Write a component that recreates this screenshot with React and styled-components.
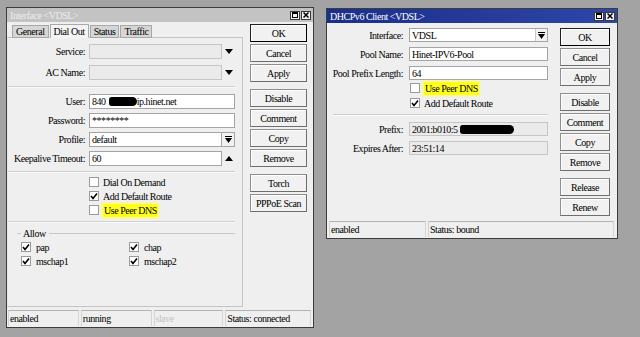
import React from "react";
import styled, { createGlobalStyle } from "styled-components";

const GlobalStyle = createGlobalStyle`
  html, body {
    margin: 0;
    padding: 0;
  }
  body {
    width: 640px;
    height: 337px;
    overflow: hidden;
    background: #a3a3a3;
    font-family: "Liberation Serif", "Times New Roman", serif;
    font-size: 10px;
    letter-spacing: -0.45px;
    color: #000;
  }
`;

const Desktop = styled.div`
  position: relative;
  width: 640px;
  height: 337px;
  background: #a3a3a3;
`;

const Window = styled.div`
  position: absolute;
  left: ${(p) => p.x}px;
  top: ${(p) => p.y}px;
  width: ${(p) => p.w}px;
  height: ${(p) => p.h}px;
  box-sizing: border-box;
  border: 1px solid #3c3c3c;
  background: #efefef;
  display: flex;
  flex-direction: column;
`;

const TitleBar = styled.div`
  height: 14px;
  flex: none;
  display: flex;
  align-items: center;
  padding: 0 2px 0 3px;
  background: ${(p) =>
    p.active ? "linear-gradient(90deg, #1b2f8a, #2d46a8)" : "#c3c3c3"};
  color: ${(p) => (p.active ? "#ffffff" : "#ececec")};
`;

const TitleText = styled.div`
  flex: 1;
  white-space: nowrap;
`;

const TitleButton = styled.div`
  width: 10px;
  height: 9px;
  margin-left: 1px;
  box-sizing: border-box;
  border: 1px solid #3a3a3a;
  background: #f4f4f4;
  display: flex;
  align-items: center;
  justify-content: center;
`;

const Body = styled.div`
  flex: 1;
  display: flex;
  min-height: 0;
  padding: ${(p) => p.pad};
`;

const LeftColumn = styled.div`
  width: ${(p) => p.w}px;
  display: flex;
  flex-direction: column;
`;

const Tabs = styled.div`
  height: 14px;
  display: flex;
  align-items: flex-end;
  padding-left: 5px;
  position: relative;
  z-index: 1;
`;

const Tab = styled.div`
  height: ${(p) => (p.selected ? 14 : 13)}px;
  box-sizing: border-box;
  padding: 0 3px;
  margin-right: 1px;
  display: flex;
  align-items: center;
  border: 1px solid #a8a8a8;
  border-bottom: ${(p) => (p.selected ? "1px solid #f4f4f4" : "1px solid #a8a8a8")};
  background: ${(p) => (p.selected ? "#f4f4f4" : "#d6d6d6")};
  white-space: nowrap;
`;

const Panel = styled.div`
  flex: 1;
  margin-top: -1px;
  box-sizing: border-box;
  border: 1px solid #c4c4c4;
  border-left-color: #e8e8e8;
  display: flex;
  flex-direction: column;
  padding: 6px 7px 0 0;
`;

const Row = styled.div`
  display: flex;
  align-items: center;
  height: ${(p) => p.h || 15}px;
  margin-top: ${(p) => p.mt || 0}px;
`;

const Label = styled.div`
  width: ${(p) => p.w}px;
  margin-right: ${(p) => p.gap}px;
  text-align: right;
  white-space: nowrap;
  flex: none;
`;

const Field = styled.div`
  flex: 1;
  height: 100%;
  box-sizing: border-box;
  border: 1px solid #a4a4a4;
  background: ${(p) => (p.disabled ? "#ebebeb" : "#ffffff")};
  border-color: ${(p) => (p.disabled ? "#c6c6c6" : "#a4a4a4")};
  display: flex;
  align-items: center;
  padding-left: 2px;
  white-space: nowrap;
  overflow: hidden;
`;

const Tail = styled.div`
  width: 13px;
  flex: none;
  height: 100%;
  display: flex;
  align-items: center;
  justify-content: center;
`;

const ComboButton = styled.div`
  width: 13px;
  flex: none;
  height: 100%;
  box-sizing: border-box;
  border: 1px solid #a4a4a4;
  border-left: none;
  background: #f2f2f2;
  display: flex;
  align-items: center;
  justify-content: center;
`;

const InnerCombo = styled.div`
  width: 12px;
  height: 100%;
  margin-left: auto;
  box-sizing: border-box;
  border-left: 1px solid #c8c8c8;
  background: #f2f2f2;
  display: flex;
  align-items: center;
  justify-content: center;
`;

const Redact = styled.span`
  display: inline-block;
  width: ${(p) => p.w}px;
  margin-left: ${(p) => p.ml || 0}px;
  height: 9px;
  background: #000;
  border-radius: 3px 5px 5px 3px;
`;

const Separator = styled.div`
  height: 1px;
  background: #cfcfcf;
  border-bottom: 1px solid #fafafa;
  margin: ${(p) => p.m};
`;

const CheckRow = styled.div`
  display: flex;
  align-items: center;
  height: 14px;
  margin-left: ${(p) => p.ml || 0}px;
  margin-top: ${(p) => p.mt || 0}px;
  white-space: nowrap;
`;

const Box = styled.div`
  width: 10px;
  height: 10px;
  box-sizing: border-box;
  border: 1px solid #9a9a9a;
  background: #ffffff;
  margin-right: ${(p) => p.gap || 4}px;
  display: flex;
  align-items: center;
  justify-content: center;
  flex: none;
`;

const Highlight = styled.span`
  background: #ffff1a;
  box-shadow: 0 0 2px 1px #ffff60;
  padding: 1px 1px;
`;

const GroupHead = styled.div`
  display: flex;
  align-items: center;
  height: 10px;
  margin: 5px 0 0 9px;
`;

const GroupLine = styled.div`
  height: 1px;
  background: #c8c8c8;
  width: ${(p) => (p.w ? `${p.w}px` : "auto")};
  flex: ${(p) => (p.w ? "none" : 1)};
  margin: ${(p) => p.m || 0};
`;

const AllowGrid = styled.div`
  display: grid;
  grid-template-columns: 108px 1fr;
  margin: 2px 0 0 13px;
`;

const Buttons = styled.div`
  width: ${(p) => p.w}px;
  margin-left: ${(p) => p.ml}px;
  display: flex;
  flex-direction: column;
  flex: none;
`;

const Button = styled.div`
  height: 18px;
  box-sizing: border-box;
  margin-top: ${(p) => (p.first ? 0 : p.group ? 7 : 2)}px;
  border: 1px solid ${(p) => (p.def ? "#202020" : "#8e8e8e")};
  border-right-color: ${(p) => (p.def ? "#000" : "#6e6e6e")};
  border-bottom-color: ${(p) => (p.def ? "#000" : "#6e6e6e")};
  background: #f1f1f1;
  box-shadow: inset 1px 1px 0 #ffffff;
  display: flex;
  align-items: center;
  justify-content: center;
  white-space: nowrap;
`;

const StatusBar = styled.div`
  height: 16px;
  flex: none;
  display: flex;
  margin: ${(p) => p.m};
`;

const StatusCell = styled.div`
  width: ${(p) => p.w}px;
  margin-right: 2px;
  box-sizing: border-box;
  border-top: 1px solid #b4b4b4;
  border-left: 1px solid #d4d4d4;
  border-right: 1px solid #d4d4d4;
  padding-left: 1px;
  display: flex;
  align-items: center;
  color: ${(p) => (p.dim ? "#c4c4c4" : "#000")};
  white-space: nowrap;
`;

const FormArea = styled.div`
  width: ${(p) => p.w}px;
  display: flex;
  flex-direction: column;
  flex: none;
`;

const DownTri = () => (
  <svg width="8" height="5" viewBox="0 0 8 5">
    <path d="M0 0 L8 0 L4 5 Z" fill="#000" />
  </svg>
);

const UpTri = () => (
  <svg width="8" height="5" viewBox="0 0 8 5">
    <path d="M0 5 L8 5 L4 0 Z" fill="#000" />
  </svg>
);

const BarDown = () => (
  <svg width="7" height="7" viewBox="0 0 7 7">
    <rect x="0" y="0" width="7" height="1" fill="#000" />
    <path d="M0 2 L7 2 L3.5 7 Z" fill="#000" />
  </svg>
);

const Tick = () => (
  <svg width="8" height="8" viewBox="0 0 8 8">
    <path d="M1 4 L3 6.5 L7 1.5" fill="none" stroke="#000" strokeWidth="1.6" />
  </svg>
);

const MaxIcon = () => (
  <svg width="6" height="6" viewBox="0 0 6 6">
    <rect x="0.5" y="0.5" width="5" height="5" fill="none" stroke="#000" strokeWidth="1" />
    <rect x="0" y="0" width="6" height="2" fill="#000" />
  </svg>
);

const CloseIcon = () => (
  <svg width="6" height="6" viewBox="0 0 6 6">
    <path d="M0.5 0.5 L5.5 5.5 M5.5 0.5 L0.5 5.5" stroke="#000" strokeWidth="1.5" />
  </svg>
);

const Check = ({ checked, children, gap, ...rest }) => (
  <CheckRow {...rest}>
    <Box gap={gap}>{checked && <Tick />}</Box>
    {children}
  </CheckRow>
);

const WinTitle = ({ active, children }) => (
  <TitleBar active={active}>
    <TitleText>{children}</TitleText>
    <TitleButton>
      <MaxIcon />
    </TitleButton>
    <TitleButton>
      <CloseIcon />
    </TitleButton>
  </TitleBar>
);

const ButtonColumn = ({ w, ml, items }) => (
  <Buttons w={w} ml={ml}>
    {items.map(([text, group], i) => (
      <Button key={text} first={i === 0} group={group} def={text === "OK"}>
        {text}
      </Button>
    ))}
  </Buttons>
);

const InterfaceWindow = () => (
  <Window x={6} y={7} w={308} h={321}>
    <WinTitle>Interface &lt;VDSL&gt;</WinTitle>
    <Body pad="2px 0 0 0">
      <LeftColumn w={236}>
        <Tabs>
          <Tab>General</Tab>
          <Tab selected>Dial Out</Tab>
          <Tab>Status</Tab>
          <Tab>Traffic</Tab>
        </Tabs>
        <Panel>
          <Row>
            <Label w={77} gap={4}>Service:</Label>
            <Field disabled />
            <Tail>
              <DownTri />
            </Tail>
          </Row>
          <Row mt={6}>
            <Label w={77} gap={4}>AC Name:</Label>
            <Field disabled />
            <Tail>
              <DownTri />
            </Tail>
          </Row>
          <Separator m="6px 0 6px 0" />
          <Row>
            <Label w={77} gap={4}>User:</Label>
            <Field>
              840
              <Redact w={28} ml={3} />
              ip.hinet.net
            </Field>
          </Row>
          <Row mt={4}>
            <Label w={77} gap={4}>Password:</Label>
            <Field>********</Field>
          </Row>
          <Row mt={4}>
            <Label w={77} gap={4}>Profile:</Label>
            <Field>default</Field>
            <ComboButton>
              <BarDown />
            </ComboButton>
          </Row>
          <Row mt={4}>
            <Label w={77} gap={4}>Keepalive Timeout:</Label>
            <Field>60</Field>
            <Tail>
              <UpTri />
            </Tail>
          </Row>
          <Separator m="5px 0 2px 0" />
          <Check ml={81}>Dial On Demand</Check>
          <Check ml={81} checked>
            Add Default Route
          </Check>
          <Check ml={81}>
            <Highlight>Use Peer DNS</Highlight>
          </Check>
          <Separator m="4px 0 0 0" />
          <GroupHead>
            <GroupLine w={4} m="0 2px 0 0" />
            Allow
            <GroupLine m="0 0 0 3px" />
          </GroupHead>
          <AllowGrid>
            <Check checked gap={5}>pap</Check>
            <Check checked gap={5}>chap</Check>
            <Check checked gap={5}>mschap1</Check>
            <Check checked gap={5}>mschap2</Check>
          </AllowGrid>
        </Panel>
      </LeftColumn>
      <ButtonColumn
        w={57}
        ml={7}
        items={[
          ["OK"],
          ["Cancel"],
          ["Apply"],
          ["Disable", true],
          ["Comment"],
          ["Copy"],
          ["Remove"],
          ["Torch", true],
          ["PPPoE Scan"],
        ]}
      />
    </Body>
    <StatusBar m="3px 0 1px 1px">
      <StatusCell w={71}>enabled</StatusCell>
      <StatusCell w={71}>running</StatusCell>
      <StatusCell w={70} dim>
        slave
      </StatusCell>
      <StatusCell w={86}>Status: connected</StatusCell>
    </StatusBar>
  </Window>
);

const DhcpWindow = () => (
  <Window x={326} y={8} w={292} h={231}>
    <WinTitle active>DHCPv6 Client &lt;VDSL&gt;</WinTitle>
    <Body pad="5px 0 0 0">
      <FormArea w={221}>
        <Row h={14}>
          <Label w={76} gap={6}>Interface:</Label>
          <Field>
            VDSL
            <InnerCombo>
              <BarDown />
            </InnerCombo>
          </Field>
        </Row>
        <Row h={14} mt={5}>
          <Label w={76} gap={6}>Pool Name:</Label>
          <Field>Hinet-IPV6-Pool</Field>
        </Row>
        <Row h={14} mt={5}>
          <Label w={76} gap={6}>Pool Prefix Length:</Label>
          <Field>64</Field>
        </Row>
        <Check ml={83} mt={1}>
          <Highlight>Use Peer DNS</Highlight>
        </Check>
        <Check ml={83} mt={1} checked>
          Add Default Route
        </Check>
        <Separator m="4px 0 6px 6px" />
        <Row h={14}>
          <Label w={76} gap={6}>Prefix:</Label>
          <Field disabled>
            2001:b010:5
            <Redact w={54} ml={2} />
          </Field>
        </Row>
        <Row h={14} mt={5}>
          <Label w={76} gap={6}>Expires After:</Label>
          <Field disabled>23:51:14</Field>
        </Row>
      </FormArea>
      <ButtonColumn
        w={50}
        ml={12}
        items={[
          ["OK"],
          ["Cancel"],
          ["Apply"],
          ["Disable", true],
          ["Comment"],
          ["Copy"],
          ["Remove"],
          ["Release", true],
          ["Renew"],
        ]}
      />
    </Body>
    <StatusBar m="0 0 1px 2px">
      <StatusCell w={97}>enabled</StatusCell>
      <StatusCell w={186}>Status: bound</StatusCell>
    </StatusBar>
  </Window>
);

export default function App() {
  return (
    <Desktop>
      <GlobalStyle />
      <InterfaceWindow />
      <DhcpWindow />
    </Desktop>
  );
}
